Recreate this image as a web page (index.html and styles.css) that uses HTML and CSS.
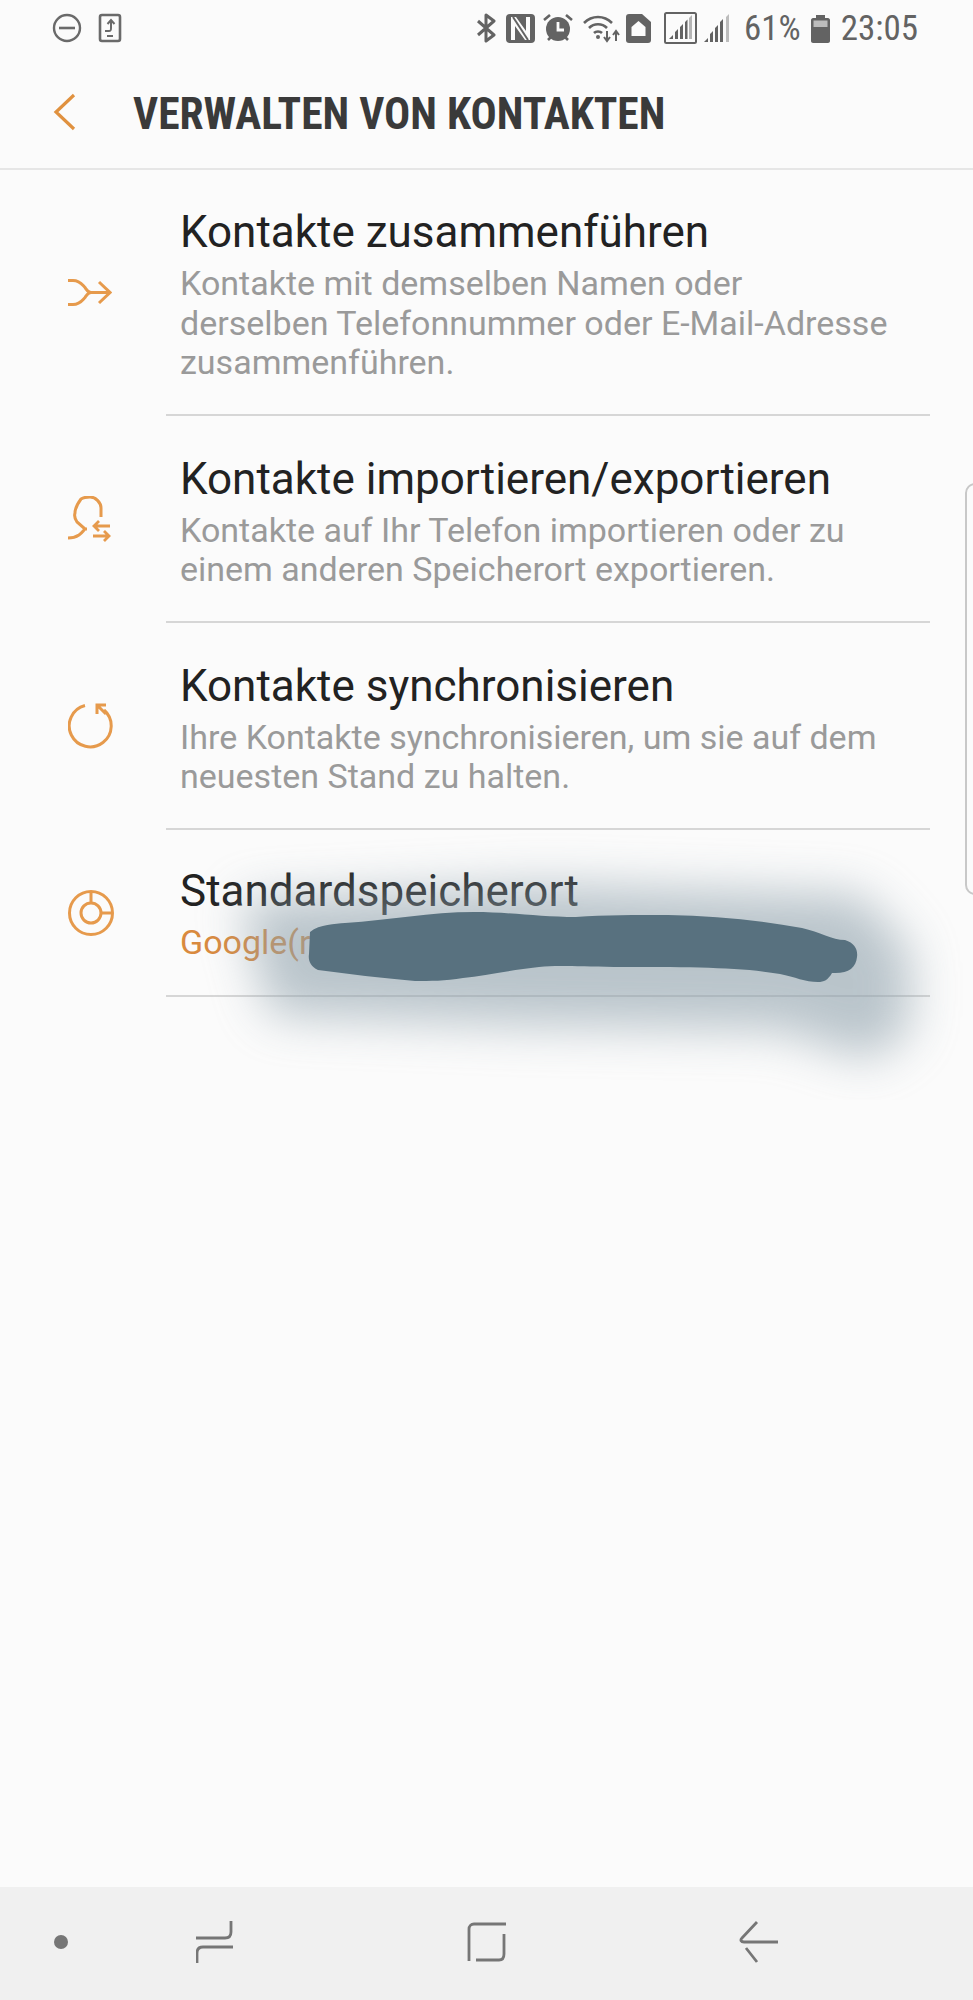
FILE: index.html

```html
<!DOCTYPE html>
<html lang="de">
<head>
  <meta charset="UTF-8" />
  <meta name="viewport" content="width=device-width, initial-scale=1.0"/>
  <title>Verwalten von Kontakten</title>
  <link rel="stylesheet" href="styles.css">
</head>
<body>
  <div class="page">
    <div class="statusbar">
      <svg class="st-dnd" width="30" height="30" viewBox="0 0 30 30"><circle cx="15" cy="15" r="13" fill="none" stroke="#6a6a6a" stroke-width="2.4"/><path d="M7 15h16" stroke="#6a6a6a" stroke-width="2.6"/></svg>
      <svg class="st-tablet" width="24" height="30" viewBox="0 0 24 30"><rect x="2" y="2" width="20" height="26" rx="2" fill="none" stroke="#6a6a6a" stroke-width="2.6"/><path d="M7 18h4c2 0 2-1 2-3V8M9.500 11l3.500-4 3.500 4M9 23h6" fill="none" stroke="#6a6a6a" stroke-width="2"/></svg>

      <div class="status-right">
        <svg class="st-bt" width="20" height="30" viewBox="0 0 20 30"><path d="M2 8l16 14-8 6V2l8 6L2 22" fill="none" stroke="#636363" stroke-width="3" stroke-linejoin="round"/></svg>
        <svg class="st-nfc" width="29" height="29" viewBox="0 0 29 29"><rect width="29" height="29" rx="4" fill="#636363"/><path d="M5 3h5l10 14V3h4v23h-5L9 12v14H5z" fill="#fbfbfb"/><path d="M7 3l15 23" stroke="#636363" stroke-width="2"/></svg>
        <svg class="st-alarm" width="30" height="30" viewBox="0 0 30 30"><circle cx="15" cy="16" r="12" fill="#636363"/><path d="M1 7l6-5M29 7l-6-5M5 27l3-3M25 27l-3-3" stroke="#636363" stroke-width="2.600"/><path d="M15 9v8h6" fill="none" stroke="#fbfbfb" stroke-width="2.800"/></svg>
        <svg class="st-wifi" width="38" height="30" viewBox="0 0 38 30"><path d="M1 10c8-8 20-8 28 0M6 15c5-5 13-5 18 0M11 20c2-2 6-2 8 0" fill="none" stroke="#636363" stroke-width="2.600"/><circle cx="15" cy="24" r="2" fill="#636363"/><path d="M24 18v9M21 24l3 4 3-4M33 28v-9M30 22l3-4 3 4" fill="none" stroke="#636363" stroke-width="2"/></svg>
        <svg class="st-sim" width="25" height="29" viewBox="0 0 25 29"><path d="M3 0h13l9 8v18c0 2-1 3-3 3H3c-2 0-3-1-3-3V3c0-2 1-3 3-3z" fill="#636363"/><path d="M12.500 7l7 6v9H5.500v-9z" fill="#fbfbfb"/></svg>
        <svg class="st-box" width="33" height="32" viewBox="0 0 33 32"><rect x="1" y="1" width="31" height="30" rx="1.500" fill="none" stroke="#636363" stroke-width="2"/><path d="M5 27l4-4v4zM11 27v-7l3-3v10zM16 27V15l3-3v15zM21 27V10l2.500-2.500V27z" fill="#636363"/><path d="M25 27V6l3-3v24z" fill="#b5b5b5"/></svg>
        <svg class="st-signal" width="27" height="29" viewBox="0 0 27 29"><path d="M0 28l4-4v4zM6 28v-8l3-3v11zM11 28V14l3-3v17zM16 28V8l3-3v23z" fill="#636363"/><path d="M22 28V3l3-3v28z" fill="#bdbdbd"/></svg>
        <span class="st-pct">61%</span>
        <svg class="st-batt" width="19" height="30" viewBox="0 0 19 30"><path d="M5 2h9v3h3c1 0 2 1 2 2v21c0 1-1 2-2 2H2c-1 0-2-1-2-2V7c0-1 1-2 2-2h3z" fill="#636363"/><rect x="2.500" y="7.500" width="14" height="6.500" fill="#bcbcbc"/></svg>
        <span class="st-time">23:05</span>
      </div>
    </div>

    <div class="topbar">
      <svg class="back" width="23" height="38" viewBox="0 0 23 38"><path d="M21 2L3 19l18 17" fill="none" stroke="#e0913f" stroke-width="3.200"/></svg>
      <h1>VERWALTEN VON KONTAKTEN</h1>
    </div>

    <div class="list">
      <div class="row row-merge">
        <div class="row-icon">
          <svg width="44" height="27" viewBox="0 0 44 27"><path d="M0 1.500h5c7 0 9 4 12 7 1.500 2 3 5 6 5h19M0 25.500h5c7 0 9-4 12-7 1.500-2 3-5 6-5M31 3l11 10.500L31 24" fill="none" stroke="#e69a4c" stroke-width="3"/></svg>
        </div>
        <div class="row-text">
          <div class="row-title">Kontakte zusammenführen</div>
          <div class="row-desc">Kontakte mit demselben Namen oder<br>derselben Telefonnummer oder E-Mail-Adresse<br>zusammenführen.</div>
        </div>
      </div>

      <div class="row row-import">
        <div class="row-icon">
          <svg width="44" height="46" viewBox="0 0 44 46"><path d="M33 21V12C33 7 28 1 22 1c-3 0-6 0-9 2-3 4-6 9-6 14-1 3 0 6 2 9l8 7h2M0 42c4 0 8-1 11-3 3-2 4-4 6-6" fill="none" stroke="#e69a4c" stroke-width="3"/><path d="M42 30H26M31 25l-5 5 5 5M25 40h16M36 35l5 5-5 5" fill="none" stroke="#e69a4c" stroke-width="2.800"/></svg>
        </div>
        <div class="row-text">
          <div class="row-title">Kontakte importieren/exportieren</div>
          <div class="row-desc">Kontakte auf Ihr Telefon importieren oder zu<br>einem anderen Speicherort exportieren.</div>
        </div>
      </div>

      <div class="row row-sync">
        <div class="row-icon">
          <svg width="46" height="46" viewBox="0 0 46 46"><path d="M17 2.500A21 21 0 1 0 36 7" fill="none" stroke="#e69a4c" stroke-width="3"/><path d="M38 2H29v9M29 2l9 9" fill="none" stroke="#e69a4c" stroke-width="3"/></svg>
        </div>
        <div class="row-text">
          <div class="row-title">Kontakte synchronisieren</div>
          <div class="row-desc">Ihre Kontakte synchronisieren, um sie auf dem<br>neuesten Stand zu halten.</div>
        </div>
      </div>

      <div class="row row-store">
        <div class="row-icon">
          <svg width="46" height="46" viewBox="0 0 46 46"><circle cx="23" cy="23" r="21.500" fill="none" stroke="#e69a4c" stroke-width="3"/><circle cx="23" cy="23" r="10" fill="none" stroke="#e69a4c" stroke-width="3"/><path d="M23 2v11M33 23h12" stroke="#e69a4c" stroke-width="3"/></svg>
        </div>
        <div class="row-text">
          <div class="row-title">Standardspeicherort</div>
          <div class="row-value">Google(r</div>
        </div>
      </div>
    </div>

    <div class="navbar">
      <span class="nav-dot"></span>
      <svg class="nav-recent" width="37" height="42" viewBox="0 0 37 42"><path d="M0 17h29c4 0 6-2 6-6V0M37 26H7c-4 0-6 2-6 6v10" fill="none" stroke="#767676" stroke-width="2.800"/></svg>
      <svg class="nav-home" width="39" height="40" viewBox="0 0 39 40"><path d="M2 39V7c0-3 2-5 5-5h32M37 12v20c0 4-2 6-5 6H9" fill="none" stroke="#767676" stroke-width="2.800"/></svg>
      <svg class="nav-back" width="39" height="42" viewBox="0 0 39 42"><path d="M18 1L3 17c-2 2-1 4 2 4h34M7 27l11 14" fill="none" stroke="#767676" stroke-width="2.800"/></svg>
    </div>

    <div class="edge-handle"></div>

    <svg class="scribble" width="800" height="300" viewBox="0 0 800 300">
      <defs>
        <filter id="soft" x="-20%" y="-60%" width="140%" height="220%"><feGaussianBlur stdDeviation="24"/></filter>
      </defs>
      <g transform="translate(40,60)">
        <path class="scribble-glow" d="M20 40L320 25 640 35 690 90 690 170 650 200 560 170 300 165 50 155z" filter="url(#soft)"/>
        <path class="scribble-ink" d="M90 72C100 64 115 64 125 63C170 60 210 52 254 52C290 52 320 57 356 57C385 55 415 55 448 55C495 56 540 60 582 68C600 72 612 80 625 80C635 83 638 90 637 97C636 108 628 114 612 113C608 120 604 122 598 122C585 122 575 117 560 114C520 107 470 107 394 107C360 107 340 105 319 107C290 110 265 116 243 118C225 121 210 121 195 121C160 118 130 114 98 110C90 106 88 100 89 94z"/>
      </g>
    </svg>
  </div>
</body>
</html>
```

FILE: styles.css

```css
html, body {
  margin: 0;
  padding: 0;
}
body {
  background-color: #fbfbfb;
  font-family: 'Roboto', sans-serif;
}
.page {
  position: relative;
  display: flex;
  flex-direction: column;
  height: 2000px;
  overflow: hidden;
}

/* status bar */
.statusbar {
  display: flex;
  align-items: center;
  height: 56px;
  padding: 0 55px 0 52px;
  color: #636363;
}
.st-tablet {
  margin-left: 16px;
}
.status-right {
  display: flex;
  align-items: center;
  margin-left: auto;
}
.st-nfc { margin-left: 10px; }
.st-alarm { margin-left: 8px; }
.st-wifi { margin-left: 10px; }
.st-sim { margin-left: 5px; }
.st-box { margin-left: 13px; }
.st-signal { margin-left: 7px; }
.st-pct {
  margin-left: 13px;
  font-size: 35px;
  font-stretch: 85%;
}
.st-batt { margin-left: 10px; }
.st-time {
  margin-left: 11px;
  font-size: 35px;
  font-stretch: 85%;
}

/* title */
.topbar {
  display: flex;
  align-items: center;
  height: 112px;
  padding-left: 53px;
  border-bottom: 2px solid #e6e6e6;
}
.topbar h1 {
  margin: 5px 0 0 57px;
  font-size: 43.500px;
  font-weight: 700;
  font-stretch: 85%;
  color: #3a3a3a;
  white-space: nowrap;
}

/* rows */
.row {
  display: flex;
  align-items: center;
  margin-left: 166px;
  margin-right: 43px;
  border-bottom: 2px solid #d6d6d6;
  position: relative;
}
.row-icon {
  position: absolute;
  left: -98px;
  top: 0;
  bottom: 0;
  display: flex;
  align-items: center;
}
.row-text {
  padding-top: 7px;
  padding-left: 14px;
}
.row-title {
  font-size: 44px;
  line-height: 48px;
  color: #222222;
}
.row-desc {
  margin-top: 8px;
  font-size: 34px;
  line-height: 39.500px;
  color: #9a9a9a;
}
.row-value {
  margin-top: 7px;
  font-size: 34px;
  line-height: 40px;
  color: #d98a3e;
}
.row-merge { height: 244px; }
.row-import { height: 205px; }
.row-sync { height: 205px; }
.row-store { height: 165px; }
.row-store .row-text { padding-top: 4px; }

/* bottom bar */
.navbar {
  display: flex;
  align-items: center;
  margin-top: auto;
  height: 109px;
  padding-left: 54px;
  padding-bottom: 4px;
  background-color: #f0f0f0;
}
.nav-dot {
  width: 14px;
  height: 14px;
  border-radius: 50%;
  background-color: #767676;
}
.nav-recent { margin-left: 128px; }
.nav-home { margin-left: 234px; }
.nav-back { margin-left: 233px; }

/* handle on the right edge */
.edge-handle {
  position: absolute;
  top: 483px;
  left: 965px;
  width: 20px;
  height: 408px;
  border: 2px solid #c8c8c8;
  border-radius: 10px;
}

/* scribbled-out account name */
.scribble {
  position: absolute;
  left: 180px;
  top: 800px;
}
.scribble-glow {
  fill: #8ea0ab;
  opacity: 0.6;
}
.scribble-ink {
  fill: #58717f;
}
```
